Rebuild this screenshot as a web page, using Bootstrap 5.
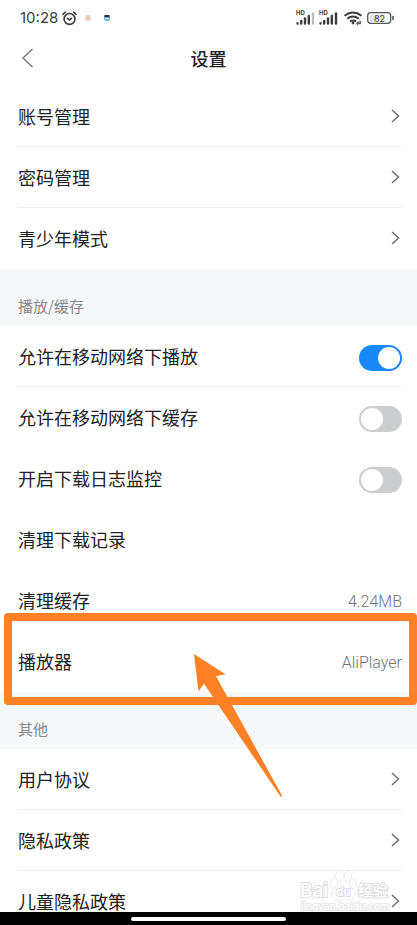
<!DOCTYPE html>
<html lang="zh-CN">
<head>
<meta charset="utf-8">
<meta name="viewport" content="width=device-width, initial-scale=1">
<title>设置</title>
<link href="https://cdn.jsdelivr.net/npm/bootstrap@5.3.0/dist/css/bootstrap.min.css" rel="stylesheet">
<style>
body { font-family: "Noto Sans", "Noto Sans CJK SC", sans-serif; color: #202124; background: #fff; }
.status-bar { height: 36px; padding: 0 22px 0 20px; color: #3c3c3e; }
.clock { font-family: Inter, sans-serif; font-size: 15px; line-height: 20px; }
.title-bar { height: 50px; padding: 0 20px 7px; }
.title-bar h1 { font-family: "Noto Sans CJK SC", sans-serif; font-size: 18px; line-height: 24px; font-weight: 500; }
.title-bar .side { width: 22px; }
.title-bar svg { display: block; }
.setting { height: 61px; margin: 0; padding: 0 15px 2px 18px; font-family: "Noto Sans CJK SC", sans-serif; font-size: 18px; line-height: 24px; color: #202124; }
.setting.form-switch { padding-bottom: 0; }
.setting label { padding-bottom: 2px; }
.setting.ruled::after { content: ""; position: absolute; left: 17px; right: 15px; bottom: 0; height: 1px; background: #f1f1f2; }
.setting-value { font-family: Roboto, sans-serif; font-size: 16px; font-weight: 300; color: #6f7278; padding-top: 4px; }
.group-label { height: 57px; padding: 16px 18px 0; background: #f6f7f9; font-family: "Noto Sans CJK SC", sans-serif; font-size: 15px; line-height: 20px; font-weight: 400; color: #85888e; }
.form-check-input.toggle { width: 43px; height: 26px; margin: 2px 0 0; border: 0; background-color: #cccdcf; background-size: 26px 26px; background-image: url("data:image/svg+xml,%3csvg xmlns='http://www.w3.org/2000/svg' viewBox='0 0 26 26'%3e%3ccircle cx='13' cy='13' r='11' fill='white'/%3e%3c/svg%3e") !important; border-radius: 13px; background-position: left center; }
.form-check-input.toggle:checked { background-color: #1989fa; background-position: right center; }
.highlight { position: absolute; top: -18px; bottom: -13px; left: 4px; right: 0; border: 8px solid #ff8025; border-radius: 4px; z-index: 2; pointer-events: none; }
.pointer { position: absolute; left: 194px; top: 23px; z-index: 3; pointer-events: none; }
.watermark { position: absolute; right: 27px; bottom: -2px; z-index: 1; pointer-events: none; }
.home-bar { height: 13px; z-index: 4; }
.home-bar span { width: 37%; height: 4px; }
</style>
</head>
<body class="vh-100 overflow-hidden d-flex flex-column">
<header class="flex-shrink-0">
  <div class="status-bar d-flex align-items-center">
    <span class="clock">10:28</span>
    <svg class="ms-1" width="15" height="15" viewBox="0 0 16 16" fill="none" stroke="#3c3c3e" stroke-width="1.7" stroke-linecap="round" aria-hidden="true"><circle cx="8" cy="8.500" r="5.800"/><path d="M1 3.500 3.500 1.300M15 3.500 12.500 1.300M5.800 7.800 8 9.500 10.200 7.800"/></svg>
    <svg class="ms-1" width="32" height="8" viewBox="0 0 32 8" aria-hidden="true"><rect x="4" y="1" width="6" height="6" rx="1" fill="#f1d9cc"/><path d="M5.500 3h3v2h-3z" fill="#c6bdb9"/><rect x="23" y="1" width="6" height="6" rx="2" fill="#65bde6"/><path d="M23.500 1h5v2.500h-5z" fill="#17324c"/><path d="M24 3.700h4v1.300h-4z" fill="#fff"/></svg>
    <svg class="ms-auto" width="99" height="18" viewBox="0 0 99 18" aria-hidden="true">
      <g id="signal">
        <text x="0" y="6" font-family="Inter, sans-serif" font-size="6" font-weight="700" fill="#3c3c3e">HD</text>
        <path d="M1.500 14.200v.4M5.200 12v2.600M9 9.500v5.100M12.800 7v7.600" stroke="#3c3c3e" stroke-width="2.400" stroke-linecap="round"/>
      </g>
      <path d="M17 4.500v10.100" stroke="#bbb" stroke-width="2.400" stroke-linecap="round"/>
      <use href="#signal" x="23"/>
      <path d="M40 4.500v10.100" stroke="#3c3c3e" stroke-width="2.400" stroke-linecap="round"/>
      <g fill="none" stroke="#3c3c3e" stroke-width="2"><path d="M48.500 6.800Q57 .300 65.500 6.800M51.200 9.700Q57 5.300 62.800 9.700M54 12.400Q57 10.500 60 12.400"/></g>
      <circle cx="57" cy="14" r="1.400" fill="#3c3c3e"/>
      <path d="M60.500 13.200h4.500l-1.500-1.500M65 14.700h-4.500l1.500 1.500" fill="none" stroke="#3c3c3e"/>
      <rect x="71.700" y="3.700" width="23" height="10.600" rx="3" fill="#fff" stroke="#555" stroke-width="1.300"/><rect x="73.500" y="5.500" width="15" height="7" rx="1" fill="#e2e2e2"/>
      <path d="M97 7.500v3" stroke="#555" stroke-width="1.600" stroke-linecap="round"/>
      <text x="83.500" y="12.500" text-anchor="middle" font-family="Inter, sans-serif" font-size="9" font-weight="400" fill="#3c3c3e">82</text>
    </svg>
  </div>
  <div class="title-bar d-flex align-items-center justify-content-between">
    <button type="button" class="btn p-0 border-0 side text-start" aria-label="返回"><svg width="14" height="20" viewBox="0 0 14 20" fill="none" stroke="#77797f" stroke-width="1.400"><path d="M12.500 1 3 10l9.500 9"/></svg></button>
    <h1 class="m-0">设置</h1>
    <span class="side"></span>
  </div>
</header>
<main class="flex-fill overflow-hidden position-relative">
  <a href="#account" class="setting ruled position-relative d-flex align-items-center justify-content-between text-decoration-none">账号管理<svg width="12" height="14" viewBox="0 0 12 14" fill="none" stroke="#6d6f72" stroke-width="1.500"><path d="M2 1l6.500 6L2 13"/></svg></a>
  <a href="#password" class="setting ruled position-relative d-flex align-items-center justify-content-between text-decoration-none">密码管理<svg width="12" height="14" viewBox="0 0 12 14" fill="none" stroke="#6d6f72" stroke-width="1.500"><path d="M2 1l6.500 6L2 13"/></svg></a>
  <a href="#teen" class="setting d-flex align-items-center justify-content-between text-decoration-none">青少年模式<svg width="12" height="14" viewBox="0 0 12 14" fill="none" stroke="#6d6f72" stroke-width="1.500"><path d="M2 1l6.500 6L2 13"/></svg></a>

  <h2 class="group-label m-0 d-flex align-items-center">播放/缓存</h2>
  <div class="setting ruled position-relative form-switch d-flex align-items-center justify-content-between"><label for="play-mobile">允许在移动网络下播放</label><input class="form-check-input toggle" type="checkbox" role="switch" id="play-mobile" checked></div>
  <div class="setting form-switch d-flex align-items-center justify-content-between"><label for="cache-mobile">允许在移动网络下缓存</label><input class="form-check-input toggle" type="checkbox" role="switch" id="cache-mobile"></div>
  <div class="setting form-switch d-flex align-items-center justify-content-between"><label for="log-monitor">开启下载日志监控</label><input class="form-check-input toggle" type="checkbox" role="switch" id="log-monitor"></div>
  <a href="#clear-downloads" class="setting d-flex align-items-center text-decoration-none">清理下载记录</a>
  <a href="#clear-cache" class="setting d-flex align-items-center justify-content-between text-decoration-none">清理缓存<span class="setting-value">4.24MB</span></a>
  <div class="position-relative">
    <a href="#player" class="setting d-flex align-items-center justify-content-between text-decoration-none">播放器<span class="setting-value">AliPlayer</span></a>
    <div class="highlight"></div>
    <svg class="pointer" width="89" height="144" viewBox="0 0 89 144" fill="#ff8025" aria-hidden="true"><path d="M0 0 31.500 20.300 22 22.300 88 141.500Q88 143 86.500 142.500L10 29.800 4.500 37.300Z"/></svg>
  </div>

  <h2 class="group-label m-0 d-flex align-items-center">其他</h2>
  <a href="#agreement" class="setting ruled position-relative d-flex align-items-center justify-content-between text-decoration-none">用户协议<svg width="12" height="14" viewBox="0 0 12 14" fill="none" stroke="#6d6f72" stroke-width="1.500"><path d="M2 1l6.500 6L2 13"/></svg></a>
  <a href="#privacy" class="setting ruled position-relative d-flex align-items-center justify-content-between text-decoration-none">隐私政策<svg width="12" height="14" viewBox="0 0 12 14" fill="none" stroke="#6d6f72" stroke-width="1.500"><path d="M2 1l6.500 6L2 13"/></svg></a>
  <a href="#child-privacy" class="setting d-flex align-items-center justify-content-between text-decoration-none">儿童隐私政策<svg width="12" height="14" viewBox="0 0 12 14" fill="none" stroke="#6d6f72" stroke-width="1.500"><path d="M2 1l6.500 6L2 13"/></svg></a>

  <svg class="watermark" width="90" height="44" viewBox="0 0 90 44" fill="#fff" stroke="#dedede" stroke-width="1" aria-hidden="true">
    <g paint-order="stroke">
      <text x="0" y="27" font-family="Inter, sans-serif" font-size="19" font-weight="500" stroke-width="2">Bai</text>
      <ellipse cx="34" cy="13" rx="3.500" ry="5"/><ellipse cx="39.500" cy="6" rx="3.500" ry="5"/><ellipse cx="48" cy="6" rx="3.500" ry="5"/><ellipse cx="53" cy="13.500" rx="3.500" ry="4.500"/>
      <path d="M43.500 11c5 0 5 5 9 8 5 4 3 10-3 10-3 0-9 0-12 0-6 0-8-6-3-10 4-3 4-8 9-8z"/>
      <text x="36" y="26" font-family="Inter, sans-serif" font-size="12" font-weight="500" stroke-width="2">du</text>
      <text x="58" y="26" font-family="Noto Sans CJK SC, sans-serif" font-size="15" font-weight="500" stroke-width="2">经验</text>
      <text x="1" y="40" font-family="Inter, sans-serif" font-size="10" font-weight="500" stroke="#e8e8e8" stroke-width="2">jingyan.baidu.com</text>
    </g>
  </svg>
</main>
<footer class="home-bar bg-black flex-shrink-0 d-flex justify-content-center align-items-center"><span class="bg-white rounded-pill"></span></footer>
<script src="https://cdn.jsdelivr.net/npm/bootstrap@5.3.0/dist/js/bootstrap.bundle.min.js"></script>
</body>
</html>
